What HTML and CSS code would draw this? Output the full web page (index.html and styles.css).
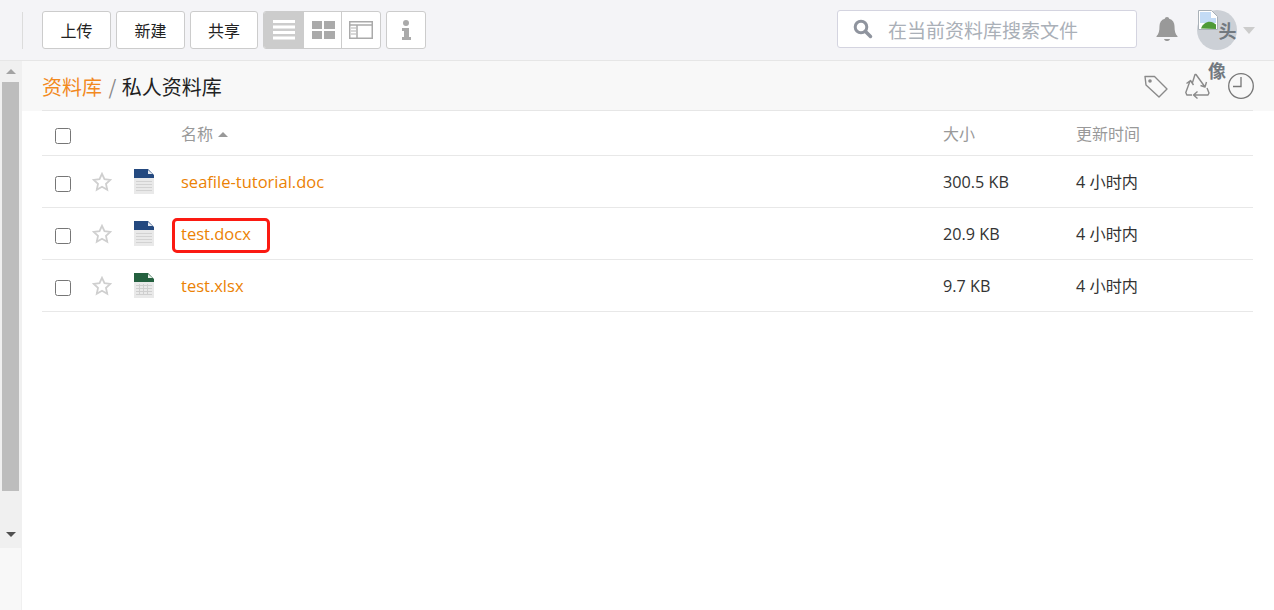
FILE: index.html
```html
<!DOCTYPE html>
<html>
	<head>
		<meta charset="UTF-8">
		<title>私人资料库</title>
		<link rel="stylesheet" href="styles.css">
	</head>
	<body>
		<header class="topbar">
			<div class="divider"></div>
			<div class="toolbar">
				<button class="btn">上传</button>
				<button class="btn">新建</button>
				<button class="btn btn-last">共享</button>
				<div class="views">
					<span class="view active">
						<svg width="24" height="20" viewBox="0 0 24 20"><path fill="#fff" d="M1 0h22v3H1zM1 5.500h22v3H1zM1 11h22v3H1zM1 16.500h22v3H1z"/></svg>
					</span>
					<span class="view">
						<svg width="24" height="20" viewBox="0 0 24 20"><path fill="#aaa" d="M1 1h10v8H1zM13 1h11v8H13zM1 11h10v8H1zM13 11h11v8H13z"/></svg>
					</span>
					<span class="view">
						<svg width="24" height="20" viewBox="0 0 24 20"><path fill="none" stroke="#aaa" stroke-width="1.500" d="M.75 1.750h22.500v16.500H.75zM.75 5h22.500M8 5v13.250"/><path stroke="#ccc" stroke-width="1.500" d="M2 8h5M2 11h5M2 14h5"/></svg>
					</span>
				</div>
				<span class="btn-info">
					<svg width="10" height="20" viewBox="0 0 10 20"><circle cx="5" cy="3" r="3" fill="#aaa"/><path fill="#aaa" d="M1 8h7v9h2v3H1v-3h2v-6H1z"/></svg>
				</span>
			</div>
			<div class="search">
				<svg width="20" height="20" viewBox="0 0 20 20"><circle cx="8" cy="8" r="5.800" fill="none" stroke="#8f949e" stroke-width="3"/><path stroke="#8f949e" stroke-width="3.500" stroke-linecap="round" d="M12.500 12.500l5 5"/></svg>
				<span class="search-text">在当前资料库搜索文件</span>
			</div>
			<svg class="bell" width="24" height="26" viewBox="0 0 24 26"><path fill="#999" d="M12 1c1.500 0 2 1 2.200 1.700C17.800 3.700 19.500 6.700 19.500 10c0 5 .8 8 3 10.200V21h-21v-.8c2.200-2.200 3-5.200 3-10.200 0-3.300 1.700-6.300 5.300-7.300C10 2 10.500 1 12 1z"/><path fill="#999" d="M9 23h6c-.5 1.500-1.500 2-3 2s-2.500-.5-3-2z"/></svg>
			<div class="avatar">
				<svg class="broken" width="20" height="20" viewBox="0 0 20 20"><path fill="#fff" stroke="#a9b1b8" d="M.5.500h13l6 6v13H.500z"/><path fill="#c3dbf5" d="M2 2h11v6h5v5H2z"/><path fill="#4f9a38" d="M3 18.500c2-6 8-8 12-6l3 2v4.500z"/></svg>头像
			</div>
			<span class="caret"></span>
		</header>
		<div class="main">
			<aside class="side">
				<div class="scroll">
					<span class="arrow-up"></span>
					<div class="thumb"></div>
					<span class="arrow-down"></span>
				</div>
			</aside>
			<section class="content">
				<div class="crumbs">
					<div class="path">
						<a class="lib" href="#">资料库</a>
						<span class="sep">/</span>
						<span>私人资料库</span>
					</div>
					<div class="tools">
						<svg width="26" height="26" viewBox="0 0 26 26"><path fill="none" stroke="#8a8a8a" stroke-width="1.400" stroke-linejoin="round" d="M2 3.500l9.500 0 12.500 12.500-8 8L3 12z"/><circle cx="7" cy="8" r="1.800" fill="#8a8a8a"/></svg>
						<svg width="26" height="26" viewBox="0 0 26 26"><path fill="none" stroke="#8a8a8a" stroke-width="1.400" stroke-linejoin="round" d="M7.500 9.500L10 1.500h1L20 14M15.500 12.500l4.500 1.500 1.500-5M5 8L.8 19.500l1 2.500H7M1.500 10.500L5.500 7.500l3 4.500M22 15l2 5-1 2H9M12.500 18.500L8.500 22l4 3.500"/></svg>
						<svg width="28" height="28" viewBox="0 0 28 28"><circle cx="14" cy="14" r="12.300" fill="none" stroke="#777" stroke-width="1.300"/><path fill="none" stroke="#777" stroke-width="1.300" d="M14 5v9.500H6"/></svg>
					</div>
				</div>
				<div class="list">
					<div class="row row-head">
						<span class="cell-check"><input type="checkbox" class="check"></span>
						<span class="cell-star"></span>
						<span class="cell-icon"></span>
						<span class="cell-name head">名称 <i class="sort"></i></span>
						<span class="cell-size head">大小</span>
						<span class="cell-time head">更新时间</span>
					</div>
					<div class="row">
						<span class="cell-check"><input type="checkbox" class="check"></span>
						<span class="cell-star">
							<svg width="20" height="20" viewBox="0 0 20 20"><path class="star" d="M10 1.800l2.500 5.400 5.800.7-4.300 4 1.200 5.800-5.200-2.900-5.200 2.900 1.200-5.800-4.300-4 5.800-.7z"/></svg>
						</span>
						<span class="cell-icon">
							<svg width="20" height="25" viewBox="0 0 20 25"><path fill="#e9e9e9" d="M0 9h20v16H0z"/><path fill="#d2d2d2" d="M2 12h16v1H2zM2 15h16v1H2zM2 18h16v1H2zM2 21h16v1H2z"/><path fill="#24497f" d="M0 0h14l6 6v3H0z"/><path fill="#e8ecf2" d="M14 1v4h4.500z"/></svg>
						</span>
						<span class="cell-name"><a class="file" href="#">seafile-tutorial.doc</a></span>
						<span class="cell-size">300.5 KB</span>
						<span class="cell-time">4 小时内</span>
					</div>
					<div class="row">
						<span class="cell-check"><input type="checkbox" class="check"></span>
						<span class="cell-star">
							<svg width="20" height="20" viewBox="0 0 20 20"><path class="star" d="M10 1.800l2.500 5.400 5.800.7-4.300 4 1.200 5.800-5.200-2.900-5.200 2.900 1.200-5.800-4.300-4 5.800-.7z"/></svg>
						</span>
						<span class="cell-icon">
							<svg width="20" height="25" viewBox="0 0 20 25"><path fill="#e9e9e9" d="M0 9h20v16H0z"/><path fill="#d2d2d2" d="M2 12h16v1H2zM2 15h16v1H2zM2 18h16v1H2zM2 21h16v1H2z"/><path fill="#24497f" d="M0 0h14l6 6v3H0z"/><path fill="#e8ecf2" d="M14 1v4h4.500z"/></svg>
						</span>
						<span class="cell-name">
							<a class="file" href="#">test.docx</a>
							<span class="mark"></span>
						</span>
						<span class="cell-size">20.9 KB</span>
						<span class="cell-time">4 小时内</span>
					</div>
					<div class="row">
						<span class="cell-check"><input type="checkbox" class="check"></span>
						<span class="cell-star">
							<svg width="20" height="20" viewBox="0 0 20 20"><path class="star" d="M10 1.800l2.500 5.400 5.800.7-4.300 4 1.200 5.800-5.200-2.900-5.200 2.900 1.200-5.800-4.300-4 5.800-.7z"/></svg>
						</span>
						<span class="cell-icon">
							<svg width="20" height="25" viewBox="0 0 20 25"><path fill="#e9e9e9" d="M0 9h20v16H0z"/><path fill="#cfcfcf" d="M2 12h16v1H2zM2 15h16v1H2zM2 18h16v1H2zM2 21h16v1H2zM5 11h1v11H5zM9 11h1v11H9zM13 11h1v11h-1z"/><path fill="#24603f" d="M0 0h14l6 6v3H0z"/><path fill="#e8f0ea" d="M14 1v4h4.500z"/></svg>
						</span>
						<span class="cell-name"><a class="file" href="#">test.xlsx</a></span>
						<span class="cell-size">9.7 KB</span>
						<span class="cell-time">4 小时内</span>
					</div>
				</div>
			</section>
		</div>
	</body>
</html>
```

FILE: styles.css
```css
* {
	margin: 0;
	padding: 0;
	box-sizing: border-box;
}
html, body {
	height: 100%;
	overflow: hidden;
}
body {
	display: flex;
	flex-direction: column;
	background-color: #fff;
	color: #333;
	font-family: "Open Sans", "Noto Sans CJK SC", sans-serif;
	font-size: 16.200px;
}
.topbar {
	display: flex;
	align-items: center;
	flex: none;
	height: 61px;
	padding-left: 22px;
	background-color: #f4f4f7;
	border-bottom: 1px solid #e6e6e6;
}
.divider {
	width: 1px;
	height: 37px;
	background-color: #dcdcdc;
}
.toolbar {
	display: flex;
	margin-left: 19px;
	margin-bottom: 1px;
}
.btn {
	width: 69px;
	height: 38px;
	margin-right: 5px;
	background-color: #fff;
	border: 1px solid #ccc;
	border-radius: 3px;
	color: #222;
	font-family: "Noto Sans CJK SC", sans-serif;
	font-size: 16px;
}
.btn-last {
	width: 68px;
}
.views {
	display: flex;
	width: 118px;
	height: 38px;
	background-color: #fff;
	border: 1px solid #ccc;
	border-radius: 3px;
	overflow: hidden;
}
.view {
	display: flex;
	flex: none;
	align-items: center;
	justify-content: center;
	width: 39px;
	border-left: 1px solid #ccc;
}
.view:first-child {
	border-left: none;
}
.view:nth-child(2) {
	width: 38px;
}
.active {
	background-color: #ccc;
}
.btn-info {
	display: flex;
	align-items: center;
	justify-content: center;
	width: 40px;
	height: 38px;
	margin-left: 5px;
	background-color: #fff;
	border: 1px solid #ccc;
	border-radius: 3px;
}
.search {
	display: flex;
	align-items: center;
	width: 300px;
	height: 38px;
	margin-left: auto;
	margin-bottom: 2px;
	padding-left: 15px;
	background-color: #fff;
	border: 1px solid #d4d4e0;
	border-radius: 3px;
}
.search-text {
	margin-left: 15px;
	color: #aab0b8;
	font-family: "Noto Sans CJK SC", sans-serif;
	font-size: 19px;
}
.bell {
	margin-left: 18px;
	margin-bottom: 3px;
}
.avatar {
	position: relative;
	z-index: 1;
	width: 40px;
	height: 40px;
	margin-left: 18px;
	background-color: #ccd0d6;
	border-radius: 50%;
	color: #727980;
	font-family: "Noto Sans CJK SC", sans-serif;
	font-size: 18px;
	font-weight: 700;
	line-height: 40px;
	text-align: center;
}
.broken {
	margin-right: 1px;
	vertical-align: top;
}
.caret {
	margin-left: 6px;
	margin-right: 19px;
	border-top: 7px solid #ccc;
	border-left: 6px solid transparent;
	border-right: 6px solid transparent;
}
.main {
	display: flex;
	flex: 1;
	min-height: 0;
}
.side {
	flex: none;
	width: 22px;
	background-color: #f8f8f8;
	border-right: 1px solid #f0f0f0;
}
.scroll {
	display: flex;
	flex-direction: column;
	align-items: center;
	width: 21px;
	height: 487px;
	background-color: #f0f0f0;
}
.arrow-up {
	margin-top: 8px;
	border-bottom: 5px solid #a3a3a3;
	border-left: 5px solid transparent;
	border-right: 5px solid transparent;
}
.thumb {
	width: 17px;
	height: 409px;
	margin-top: 8px;
	background-color: #bdbdbd;
}
.arrow-down {
	margin-top: 41px;
	border-top: 5px solid #505050;
	border-left: 5px solid transparent;
	border-right: 5px solid transparent;
}
.content {
	flex: 1;
	min-width: 0;
}
.crumbs {
	display: flex;
	align-items: center;
	justify-content: space-between;
	height: 50px;
	padding: 0 19px 0 20px;
	background-color: #f8f8f8;
}
.path {
	color: #222;
	font-family: "Noto Sans CJK SC", sans-serif;
	font-size: 20px;
}
.lib {
	color: #f28a1f;
	text-decoration: none;
}
.sep {
	margin: 0 1px 0 2px;
	color: #888;
}
.tools {
	display: flex;
	align-items: center;
	gap: 16px;
}
.list {
	margin: -1px 21px 0 20px;
}
.row {
	display: flex;
	align-items: center;
	height: 52px;
	border-bottom: 1px solid #e8e8e8;
	line-height: 24px;
}
.row-head {
	height: 46px;
	border-top: 1px solid #e6e6e6;
}
.cell-check {
	display: flex;
	flex: none;
	width: 49px;
	padding: 4px 0 0 13px;
}
.row-head .cell-check {
	padding-top: 6px;
}
.check {
	width: 16px;
	height: 16px;
}
.cell-star {
	display: flex;
	flex: none;
	width: 42px;
	padding-left: 1px;
}
.cell-icon {
	display: flex;
	flex: none;
	width: 48px;
	padding-left: 1px;
}
.cell-name {
	position: relative;
	flex: none;
	width: 762px;
}
.cell-size {
	flex: none;
	width: 133px;
}
.cell-time {
	flex: 1;
}
.star {
	fill: none;
	stroke: #cfcfcf;
	stroke-width: 1.800;
}
.head {
	padding-top: 2px;
	color: #999;
	font-size: 16px;
}
.sort {
	display: inline-block;
	margin-left: 1px;
	margin-bottom: 3px;
	border-bottom: 5px solid #999;
	border-left: 5px solid transparent;
	border-right: 5px solid transparent;
}
.file {
	color: #eb8205;
	font-size: 16.500px;
	text-decoration: none;
}
.mark {
	position: absolute;
	left: -9px;
	top: -4px;
	width: 98px;
	height: 35px;
	border: 3px solid #fb1a12;
	border-radius: 5px;
}
```
